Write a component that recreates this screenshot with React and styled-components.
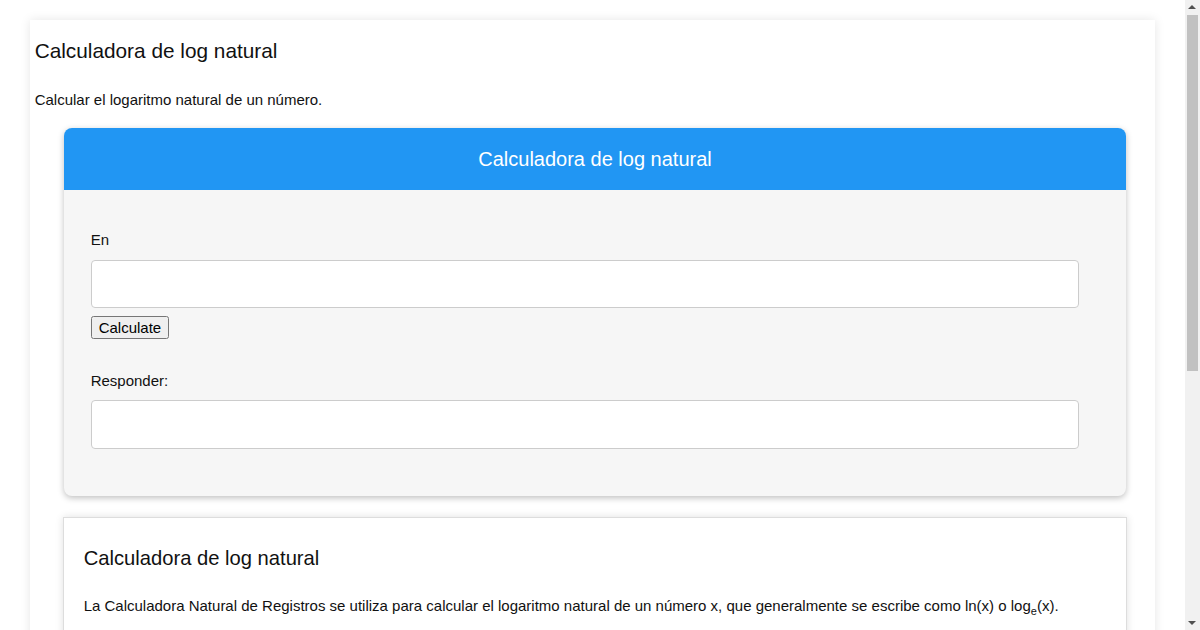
import React from 'react'
import styled, { createGlobalStyle } from 'styled-components'

const GlobalStyle = createGlobalStyle`
 html, body {
  margin: 0;
  padding: 0;
  background: #fff;
  color: #111;
  font-family: 'Liberation Sans', Arial, sans-serif;
 }
 body {
  margin-right: 15px;
 }
 ::-webkit-scrollbar {
  display: none;
 }
`

// stand-in for the browser scrollbar seen in the screenshot
const Scrollbar = styled.div`
 position: fixed;
 top: 0;
 right: 0;
 width: 15px;
 height: 100vh;
 background: #f1f1f1;
 .thumb {
  position: absolute;
  left: 2px;
  right: 2px;
  top: 15px;
  height: 356px;
  background: #c1c1c1;
 }
 .up,
 .down {
  position: absolute;
  left: 3px;
  width: 0;
  height: 0;
  border-left: 4px solid transparent;
  border-right: 4px solid transparent;
 }
 .up {
  top: 5px;
  border-bottom: 4px solid #505050;
 }
 .down {
  bottom: 5px;
  border-top: 4px solid #505050;
 }
`

const Container = styled.div`
 width: 95%;
 margin: 20px auto;
 padding: 5px 0 30px 5px;
 box-sizing: border-box;
 background: #fff;
 box-shadow: 0 0 10px rgba(0, 0, 0, 0.1);
`

const Title = styled.h1`
 font-size: 20.8px;
 font-weight: normal;
 line-height: 23px;
 margin: 14px 0 0;
`

const Intro = styled.p`
 font-size: 15px;
 line-height: 17px;
 margin: 29px 0 20px;
`

const Card = styled.div`
 margin: 0 29px;
 border-radius: 8px;
 overflow: hidden;
 background: #f6f6f6;
 box-shadow: 0 2px 6px rgba(0, 0, 0, 0.25);
`

const CardHeader = styled.div`
 height: 62px;
 display: flex;
 align-items: center;
 justify-content: center;
 background: #2196f3;
 color: #fff;
 font-size: 20px;
`

const CardBody = styled.div`
 padding: 41px 47px 47px 27px;
`

const Label = styled.label`
 display: block;
 font-size: 15px;
 line-height: 18px;
 margin-top: ${(p) => p.$top || 0}px;
`

const Field = styled.input`
 display: block;
 width: 100%;
 height: ${(p) => p.$height || 48}px;
 box-sizing: border-box;
 margin-top: ${(p) => p.$top || 0}px;
 border: 1px solid #ccc;
 border-radius: 4px;
 background: #fff;
 font-family: inherit;
 font-size: 15px;
 padding: 0 10px;
`

const Button = styled.button`
 display: block;
 margin-top: 8px;
 font-family: 'Liberation Sans', Arial, sans-serif;
 font-size: 15px;
`

const Section = styled.section`
 margin: 21px 28px 0;
 padding: 20px 20px 30px;
 background: #fff;
 border: 1px solid #ddd;
 box-shadow: 0 0 8px rgba(0, 0, 0, 0.12);
 h2 {
  font-size: 20.2px;
  font-weight: normal;
  line-height: 22px;
  margin: 9px 0 0;
 }
 p {
  font-size: 15px;
  line-height: 17px;
  margin: 28px 0 0;
 }
 sub {
  font-size: 11px;
 }
`

function App() {
 return (
  <>
   <GlobalStyle />
   <Container>
    <Title>Calculadora de log natural</Title>
    <Intro>Calcular el logaritmo natural de un número.</Intro>

    <Card>
     <CardHeader>Calculadora de log natural</CardHeader>
     <CardBody>
      <Label htmlFor="num">En</Label>
      <Field id="num" type="text" $top={11} />
      <Button type="button">Calculate</Button>
      <Label htmlFor="ans" $top={33}>
       Responder:
      </Label>
      <Field id="ans" type="text" readOnly $top={10} $height={49} />
     </CardBody>
    </Card>

    <Section>
     <h2>Calculadora de log natural</h2>
     <p>
      La Calculadora Natural de Registros se utiliza para calcular el logaritmo natural de un
      número x, que generalmente se escribe como ln(x) o log<sub>e</sub>(x).
     </p>
     <p>
      El logaritmo natural es el logaritmo en base e, donde e es una constante irracional
      aproximadamente igual a 2.718281828.
     </p>
     <h2 style={{ marginTop: 28 }}>Cómo calcular el logaritmo natural</h2>
     <p>
      El logaritmo natural de x es la potencia a la que habría que elevar e para obtener x.
      Por ejemplo, ln(7.5) es 2.0149..., porque e<sup>2.0149...</sup> = 7.5.
     </p>
     <p>Ingrese un número positivo en el campo y pulse Calculate para obtener el resultado.</p>
     <h2 style={{ marginTop: 28 }}>Propiedades</h2>
     <p>ln(x · y) = ln(x) + ln(y)</p>
     <p>ln(x / y) = ln(x) − ln(y)</p>
     <p>ln(x<sup>y</sup>) = y · ln(x)</p>
     <p>ln(1) = 0 y ln(e) = 1</p>
    </Section>
   </Container>
   <Scrollbar>
    <span className="up" />
    <span className="thumb" />
    <span className="down" />
   </Scrollbar>
  </>
 )
}

export default App
